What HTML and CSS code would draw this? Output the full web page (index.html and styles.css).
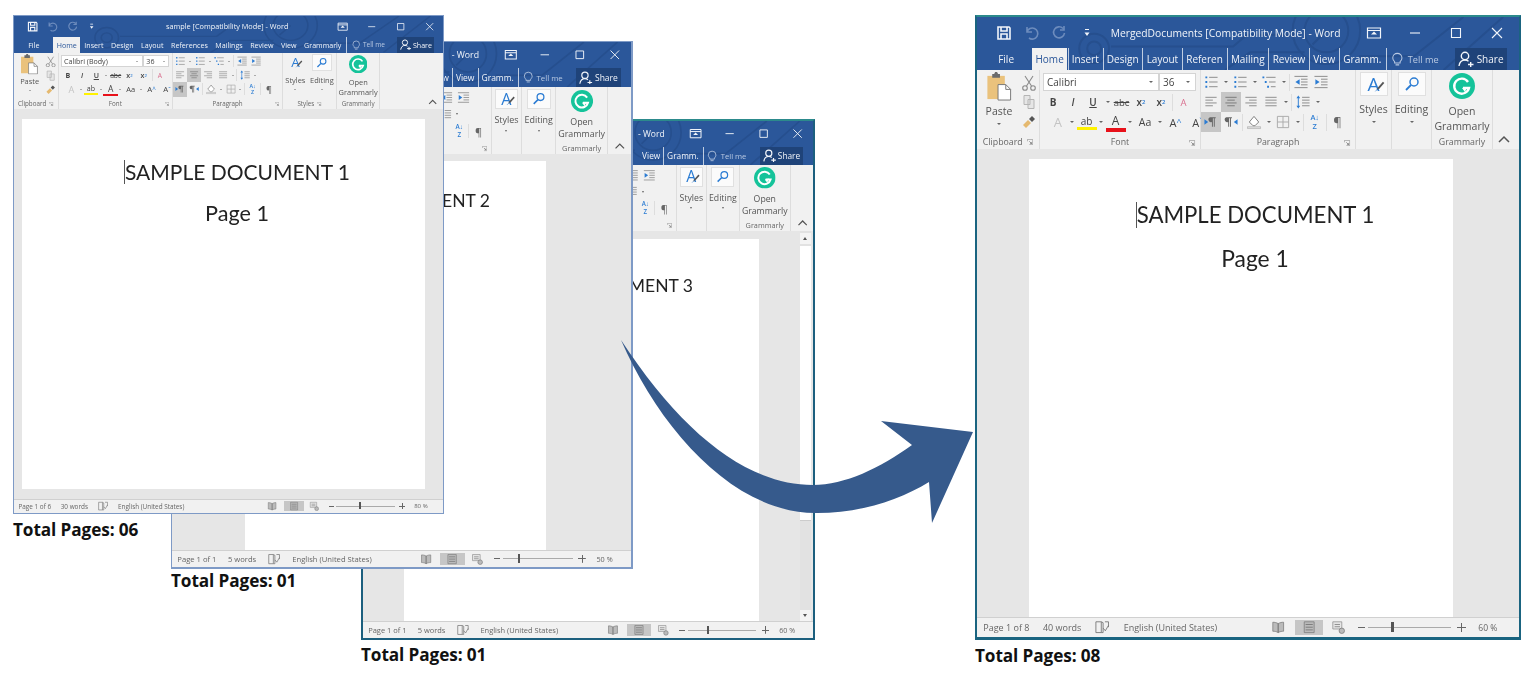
FILE: index.html
```html
<!DOCTYPE html>
<html lang="en">
<head>
  <meta charset="UTF-8">
  <meta name="viewport" content="width=device-width, initial-scale=1.0">
  <title>Merged Documents</title>
  <link rel="stylesheet" href="styles.css">
</head>
<body>
  <!-- shared icons -->
  <svg class="sprite" xmlns="http://www.w3.org/2000/svg">
    <symbol id="i-circuit" viewBox="0 0 546 54" preserveAspectRatio="none">
      <g fill="none" stroke="#264f8e" stroke-width="2">
        <circle cx="118" cy="32" r="15"/><circle cx="118" cy="32" r="7"/>
        <circle cx="352" cy="14" r="34"/><circle cx="352" cy="14" r="22"/>
        <path d="M135 30H258L272 18H320M352 14l-14 14M385 40H440L490 0M470 54L530 0M250 54L275 36H330"/>
      </g>
    </symbol>
    <symbol id="i-save" viewBox="0 0 16 16"><path d="M2 2h11l1 1v11H2z M5 2v4h6V2 M5 14v-5h6v5" fill="none" stroke="currentColor" stroke-width="1.6"/></symbol>
    <symbol id="i-undo" viewBox="0 0 16 16"><path d="M3 7a5.5 5.5 0 1 1 2 6 M3 2v5h5" fill="none" stroke="currentColor" stroke-width="1.6"/></symbol>
    <symbol id="i-redo" viewBox="0 0 16 16"><path d="M12 3.5a5.5 5.5 0 1 0 1.5 4.5 M13 1v4H9" fill="none" stroke="currentColor" stroke-width="1.6"/></symbol>
    <symbol id="i-qat" viewBox="0 0 16 16"><path d="M6 4h4v1H6z M5.5 7.5h5L8 11z" fill="currentColor"/></symbol>
    <symbol id="i-display" viewBox="0 0 16 16"><path d="M1.5 3h13v10h-13z M1.5 5.5h13" fill="none" stroke="currentColor" stroke-width="1.2"/><path d="M8 6.5l3 3H5z" fill="currentColor"/></symbol>
    <symbol id="i-min" viewBox="0 0 16 16"><path d="M3 8h10" stroke="currentColor" stroke-width="1.1"/></symbol>
    <symbol id="i-max" viewBox="0 0 16 16"><path d="M3.5 3.5h9v9h-9z" fill="none" stroke="currentColor" stroke-width="1.1"/></symbol>
    <symbol id="i-close" viewBox="0 0 16 16"><path d="M3 3l10 10M13 3L3 13" stroke="currentColor" stroke-width="1.1"/></symbol>
    <symbol id="i-bulb" viewBox="0 0 16 16"><path d="M5 10.5C3.5 9 3 7.8 3 6.5a5 5 0 0 1 10 0c0 1.300-.5 2.500-2 4v1.500H5z M6 14h4" fill="none" stroke="currentColor" stroke-width="1.1"/></symbol>
    <symbol id="i-share" viewBox="0 0 16 16"><circle cx="7" cy="5" r="3.700" fill="none" stroke="currentColor" stroke-width="1.4"/><path d="M1 15c.5-3.500 2.500-6 6-6 1.500 0 2.500.4 3.500 1.200 M10 13.500h5.500M12.700 11v5" fill="none" stroke="currentColor" stroke-width="1.4"/></symbol>
    <symbol id="i-paste" viewBox="0 0 26 30"><path d="M1 4h18v24H1z" fill="#eac27c"/><path d="M6 2h2l1-2h2l1 2h2v4H6z" fill="#6b6b6b"/><path d="M12 13h8l5 5v11H12z" fill="#fff" stroke="#777"/><path d="M20 13v5h5" fill="none" stroke="#777"/></symbol>
    <symbol id="i-cut" viewBox="0 0 16 16"><path d="M4 1l6.500 10M12 1L5.500 11" fill="none" stroke="#8a8a8a" stroke-width="1.100"/><circle cx="4" cy="13" r="2.300" fill="none" stroke="#8a8a8a" stroke-width="1.100"/><circle cx="12" cy="13" r="2.300" fill="none" stroke="#8a8a8a" stroke-width="1.100"/></symbol>
    <symbol id="i-copy" viewBox="0 0 16 16"><path d="M3 1.500h6v9H3z M7 5.500h6v9H7z" fill="#e6e6e6" stroke="#b5b5b5"/></symbol>
    <symbol id="i-brush" viewBox="0 0 16 16"><path d="M2 11l5-5 3 3-5 5z" fill="#e5b96f"/><path d="M8 5l3-3 3 3-3 3z" fill="#555"/></symbol>
    <symbol id="i-launch" viewBox="0 0 8 8"><path d="M.5 3V.5H7.500V7.500H3" fill="none" stroke="#999"/><path d="M3 3l3 3M6 4v2H4" fill="none" stroke="#777"/></symbol>
    <symbol id="i-bullets" viewBox="0 0 16 16"><path d="M2 2h2v2H2zM2 7h2v2H2zM2 12h2v2H2z" fill="#2b7cd3"/><path d="M6 3h9M6 8h9M6 13h9" stroke="#888"/></symbol>
    <symbol id="i-multi" viewBox="0 0 16 16"><path d="M1 2h2v2H1zM3.500 7h2v2h-2zM6 12h2v2H6z" fill="#2b7cd3"/><path d="M5 3h10M8 8h7M10 13h5" stroke="#888"/></symbol>
    <symbol id="i-outdent" viewBox="0 0 16 16"><path d="M1 2h14M8 5h7M8 8h7M8 11h7M1 14h14" stroke="#888"/><path d="M6.500 5v6L2 8z" fill="#2b7cd3"/></symbol>
    <symbol id="i-indent" viewBox="0 0 16 16"><path d="M1 2h14M8 5h7M8 8h7M8 11h7M1 14h14" stroke="#888"/><path d="M2 5v6l4.500-3z" fill="#2b7cd3"/></symbol>
    <symbol id="i-left" viewBox="0 0 16 16"><path d="M2 3h12M2 6h8M2 9h12M2 12h8" stroke="#8a8a8a"/></symbol>
    <symbol id="i-center" viewBox="0 0 16 16"><path d="M2 3h12M4 6h8M2 9h12M4 12h8" stroke="#777"/></symbol>
    <symbol id="i-right" viewBox="0 0 16 16"><path d="M2 3h12M6 6h8M2 9h12M6 12h8" stroke="#8a8a8a"/></symbol>
    <symbol id="i-justify" viewBox="0 0 16 16"><path d="M2 3h12M2 6h12M2 9h12M2 12h12" stroke="#8a8a8a"/></symbol>
    <symbol id="i-spacing" viewBox="0 0 16 16"><path d="M7 3h8M7 6h8M7 9h8M7 12h8" stroke="#888"/><path d="M3 1l2 3H1zM3 15l2-3H1z" fill="#2b7cd3"/><path d="M3 3v10" stroke="#2b7cd3"/></symbol>
    <symbol id="i-ltr" viewBox="0 0 16 16"><path d="M7 3h6v1h-1v9h-1V4h-1v9H9V8a2.500 2.500 0 0 1-2-5z" fill="#666"/><path d="M1 5l4 3-4 3z" fill="#2b7cd3"/></symbol>
    <symbol id="i-rtl" viewBox="0 0 16 16"><path d="M3 3h6v1H8v9H7V4H6v9H5V8a2.500 2.500 0 0 1-2-5z" fill="#666"/><path d="M15 5l-4 3 4 3z" fill="#2b7cd3"/></symbol>
    <symbol id="i-shade" viewBox="0 0 16 16"><path d="M3 8l5-6 5 6-4 4H7z" fill="#fff" stroke="#777"/><path d="M1 13h14v2H1z" fill="#ddd" stroke="#999" stroke-width=".5"/></symbol>
    <symbol id="i-border" viewBox="0 0 16 16"><path d="M2 2h12v12H2zM8 2v12M2 8h12" fill="none" stroke="#aaa"/></symbol>
    <symbol id="i-pen" viewBox="0 0 16 16"><path d="M13 1l2 2-8 9-3 1 1-3z" fill="#555"/><path d="M2 15c1-2 3-3 5-3" stroke="#2b7cd3" fill="none"/></symbol>
    <symbol id="i-find" viewBox="0 0 16 16"><circle cx="10" cy="6" r="4" fill="none" stroke="#2b7cd3" stroke-width="1.500"/><path d="M7 9l-5 5" stroke="#2b7cd3" stroke-width="1.800"/></symbol>
    <symbol id="i-grammarly" viewBox="0 0 26 26"><circle cx="13" cy="13" r="13" fill="#15c39a"/><path d="M19 9a7.500 7.500 0 1 0 1 6h-6" fill="none" stroke="#fff" stroke-width="2.400"/><path d="M16 19l-3-4 5-1z" fill="#fff"/></symbol>
    <symbol id="i-up" viewBox="0 0 16 16"><path d="M3 11l5-5 5 5" fill="none" stroke="#555" stroke-width="1.500"/></symbol>
    <symbol id="i-proof" viewBox="0 0 16 16"><path d="M7 2H1v12h6V2zM7 2l2 1v11H7M11 2h4v6" fill="none" stroke="#777"/><path d="M9 9l2.500 3L15 6" fill="none" stroke="#777"/></symbol>
    <symbol id="i-read" viewBox="0 0 16 16"><path d="M2 2.500c2 0 4 .3 6 1.500v10c-2-1.200-4-1.500-6-1.500zM14 2.500c-2 0-4 .3-6 1.500v10c2-1.200 4-1.500 6-1.500z" fill="#bbb" stroke="#777" stroke-width=".8"/></symbol>
    <symbol id="i-print" viewBox="0 0 16 16"><path d="M2.500 2h11v12h-11z" fill="#bbb" stroke="#777" stroke-width=".8"/><path d="M4 5h8M4 8h8M4 11h8" stroke="#777"/></symbol>
    <symbol id="i-web" viewBox="0 0 16 16"><path d="M2 2h10v8H2z" fill="#e6e6e6" stroke="#888" stroke-width=".8"/><path d="M4 5h6M4 7.500h6" stroke="#888"/><circle cx="12" cy="12" r="3" fill="#bbb" stroke="#777" stroke-width=".8"/></symbol>
  </svg>

  <main class="canvas">

    <section class="doc-set set-c">
      <div class="window win-c">
        <header class="win-head">
          <svg class="circuit"><use href="#i-circuit"/></svg>
          <div class="titlebar">
            <div class="win-title">- Word</div>
            <div class="win-ctrls"><svg class="ic"><use href="#i-display"/></svg><svg class="ic"><use href="#i-min"/></svg><svg class="ic"><use href="#i-max"/></svg><svg class="ic"><use href="#i-close"/></svg></div>
          </div>
          <nav class="tabs cramped">
            <span class="tab">View</span><span class="tab">Gramm.</span>
            <span class="tab tell"><svg class="ic"><use href="#i-bulb"/></svg>Tell me</span>
            <span class="share"><svg class="ic"><use href="#i-share"/></svg>Share</span>
          </nav>
        </header>
        <div class="ribbon ribbon-end">
          <div class="group g-para">
            <div class="group-body">
              <div class="tool-row para-r1"><svg class="ic tool-ic"><use href="#i-outdent"/></svg><svg class="ic tool-ic"><use href="#i-indent"/></svg></div>
              <div class="tool-row para-r2"><svg class="ic tool-ic"><use href="#i-spacing"/></svg><i class="caret"></i></div>
              <div class="tool-row para-r3"><span class="sort">A↓<br>Z</span><i class="vsep"></i><span class="tool t-pil">¶</span></div>
            </div>
            <div class="group-label"><svg class="launch launch-right"><use href="#i-launch"/></svg></div>
          </div>
          <div class="group g-style">
            <div class="group-body stack"><div class="stack-box"><span class="styles-a">A</span><svg class="pen"><use href="#i-pen"/></svg></div><span class="lbl">Styles</span><i class="caret"></i></div>
            <div class="group-label"></div>
          </div>
          <div class="group g-edit">
            <div class="group-body stack"><div class="stack-box"><svg class="ic"><use href="#i-find"/></svg></div><span class="lbl">Editing</span><i class="caret"></i></div>
            <div class="group-label"></div>
          </div>
          <div class="group g-gram">
            <div class="group-body stack"><svg class="gram-ic"><use href="#i-grammarly"/></svg><span class="lbl">Open</span><span class="lbl">Grammarly</span></div>
            <div class="group-label">Grammarly</div>
          </div>
          <div class="g-rest"><svg class="ic"><use href="#i-up"/></svg></div>
        </div>
        <div class="doc-area">
          <div class="doc-main">
            <div class="page"><p class="doc-h">MENT 3</p></div>
          </div>
          <div class="scrollbar"><i class="sb-btn sb-up"></i><i class="sb-thumb"></i><i class="sb-btn sb-down"></i></div>
        </div>
        <footer class="status">
          <span class="st-page">Page 1 of 1</span><span class="st-words">5 words</span><svg class="ic st-proof"><use href="#i-proof"/></svg><span>English (United States)</span>
          <div class="st-right"><svg class="ic"><use href="#i-read"/></svg><span class="st-active"><svg class="ic"><use href="#i-print"/></svg></span><svg class="ic"><use href="#i-web"/></svg><span class="st-minus"></span><span class="slider"><i class="thumb thumb-60"></i></span><span class="st-plus"></span><span class="st-zoom">60 %</span></div>
        </footer>
      </div>
      <p class="caption">Total Pages: 01</p>
    </section>

    <section class="doc-set set-b">
      <div class="window win-b">
        <header class="win-head">
          <svg class="circuit"><use href="#i-circuit"/></svg>
          <div class="titlebar">
            <div class="win-title">- Word</div>
            <div class="win-ctrls"><svg class="ic"><use href="#i-display"/></svg><svg class="ic"><use href="#i-min"/></svg><svg class="ic"><use href="#i-max"/></svg><svg class="ic"><use href="#i-close"/></svg></div>
          </div>
          <nav class="tabs cramped">
            <span class="tab">w</span><span class="tab">View</span><span class="tab">Gramm.</span>
            <span class="tab tell"><svg class="ic"><use href="#i-bulb"/></svg>Tell me</span>
            <span class="share"><svg class="ic"><use href="#i-share"/></svg>Share</span>
          </nav>
        </header>
        <div class="ribbon ribbon-end">
          <div class="group g-para">
            <div class="group-body">
              <div class="tool-row para-r1"><svg class="ic tool-ic"><use href="#i-outdent"/></svg><svg class="ic tool-ic"><use href="#i-indent"/></svg></div>
              <div class="tool-row para-r2"><svg class="ic tool-ic"><use href="#i-spacing"/></svg><i class="caret"></i></div>
              <div class="tool-row para-r3"><span class="sort">A↓<br>Z</span><i class="vsep"></i><span class="tool t-pil">¶</span></div>
            </div>
            <div class="group-label"><svg class="launch launch-right"><use href="#i-launch"/></svg></div>
          </div>
          <div class="group g-style">
            <div class="group-body stack"><div class="stack-box"><span class="styles-a">A</span><svg class="pen"><use href="#i-pen"/></svg></div><span class="lbl">Styles</span><i class="caret"></i></div>
            <div class="group-label"></div>
          </div>
          <div class="group g-edit">
            <div class="group-body stack"><div class="stack-box"><svg class="ic"><use href="#i-find"/></svg></div><span class="lbl">Editing</span><i class="caret"></i></div>
            <div class="group-label"></div>
          </div>
          <div class="group g-gram">
            <div class="group-body stack"><svg class="gram-ic"><use href="#i-grammarly"/></svg><span class="lbl">Open</span><span class="lbl">Grammarly</span></div>
            <div class="group-label">Grammarly</div>
          </div>
          <div class="g-rest"><svg class="ic"><use href="#i-up"/></svg></div>
        </div>
        <div class="doc-area">
          <div class="doc-main">
            <div class="page"><p class="doc-h">ENT 2</p></div>
          </div>
        </div>
        <footer class="status">
          <span class="st-page">Page 1 of 1</span><span class="st-words">5 words</span><svg class="ic st-proof"><use href="#i-proof"/></svg><span>English (United States)</span>
          <div class="st-right"><svg class="ic"><use href="#i-read"/></svg><span class="st-active"><svg class="ic"><use href="#i-print"/></svg></span><svg class="ic"><use href="#i-web"/></svg><span class="st-minus"></span><span class="slider"><i class="thumb thumb-50"></i></span><span class="st-plus"></span><span class="st-zoom">50 %</span></div>
        </footer>
      </div>
      <p class="caption">Total Pages: 01</p>
    </section>

    <section class="doc-set set-a">
      <div class="window win-a">
        <header class="win-head">
          <svg class="circuit"><use href="#i-circuit"/></svg>
          <div class="titlebar">
            <div class="qat"><svg class="ic"><use href="#i-save"/></svg><svg class="ic faded"><use href="#i-undo"/></svg><svg class="ic faded"><use href="#i-redo"/></svg><svg class="ic"><use href="#i-qat"/></svg></div>
            <div class="win-title">sample [Compatibility Mode] - Word</div>
            <div class="win-ctrls"><svg class="ic"><use href="#i-display"/></svg><svg class="ic"><use href="#i-min"/></svg><svg class="ic"><use href="#i-max"/></svg><svg class="ic"><use href="#i-close"/></svg></div>
          </div>
          <nav class="tabs">
            <span class="tab tab-file">File</span><span class="tab active">Home</span><span class="tab">Insert</span><span class="tab">Design</span><span class="tab">Layout</span><span class="tab">References</span><span class="tab">Mailings</span><span class="tab">Review</span><span class="tab">View</span><span class="tab">Grammarly</span>
            <span class="tab tell"><svg class="ic"><use href="#i-bulb"/></svg>Tell me</span>
            <span class="share"><svg class="ic"><use href="#i-share"/></svg>Share</span>
          </nav>
        </header>
        <div class="ribbon">
          <div class="group g-clip">
            <div class="group-body clip-body">
              <div class="paste"><svg class="paste-ic"><use href="#i-paste"/></svg><span class="lbl">Paste</span><i class="caret"></i></div>
              <div class="clip-side"><svg class="ic"><use href="#i-cut"/></svg><svg class="ic"><use href="#i-copy"/></svg><svg class="ic"><use href="#i-brush"/></svg></div>
            </div>
            <div class="group-label">Clipboard<svg class="launch"><use href="#i-launch"/></svg></div>
          </div>
          <div class="group g-font">
            <div class="group-body font-body">
              <div class="tool-row"><span class="font-box">Calibri (Body)<i class="caret"></i></span><span class="size-box">36<i class="caret"></i></span></div>
              <div class="tool-row">
                <span class="tool t-b">B</span><span class="tool t-i">I</span><span class="tool t-u">U</span><i class="caret"></i><span class="tool t-abc">abc</span><span class="tool t-x">x<sub>2</sub></span><span class="tool t-x">x<sup>2</sup></span><i class="vsep"></i><span class="tool t-clear">A</span>
              </div>
              <div class="tool-row row-indent">
                <span class="tool t-effect">A</span><i class="caret"></i><span class="tool t-hl">ab</span><i class="caret"></i><span class="tool t-color">A</span><i class="caret"></i><span class="tool t-case">Aa</span><i class="caret"></i><span class="tool t-grow">A<small>^</small></span><span class="tool t-grow">A<small>ˇ</small></span>
              </div>
            </div>
            <div class="group-label">Font<svg class="launch launch-right"><use href="#i-launch"/></svg></div>
          </div>
          <div class="group g-para">
            <div class="group-body">
              <div class="tool-row"><svg class="ic tool-ic"><use href="#i-bullets"/></svg><i class="caret"></i><svg class="ic tool-ic"><use href="#i-bullets"/></svg><i class="caret"></i><svg class="ic tool-ic"><use href="#i-multi"/></svg><i class="caret"></i><i class="vsep"></i><svg class="ic tool-ic"><use href="#i-outdent"/></svg><svg class="ic tool-ic"><use href="#i-indent"/></svg></div>
              <div class="tool-row"><svg class="ic tool-ic"><use href="#i-left"/></svg><svg class="ic tool-ic on"><use href="#i-center"/></svg><svg class="ic tool-ic"><use href="#i-right"/></svg><svg class="ic tool-ic"><use href="#i-justify"/></svg><i class="caret"></i><i class="vsep"></i><svg class="ic tool-ic"><use href="#i-spacing"/></svg><i class="caret"></i></div>
              <div class="tool-row"><svg class="ic tool-ic on"><use href="#i-ltr"/></svg><svg class="ic tool-ic"><use href="#i-rtl"/></svg><i class="vsep"></i><svg class="ic tool-ic"><use href="#i-shade"/></svg><i class="caret"></i><svg class="ic tool-ic"><use href="#i-border"/></svg><i class="caret"></i><i class="vsep"></i><span class="sort">A↓<br>Z</span><i class="vsep"></i><span class="tool t-pil">¶</span></div>
            </div>
            <div class="group-label">Paragraph<svg class="launch launch-right"><use href="#i-launch"/></svg></div>
          </div>
          <div class="group g-style-wide">
            <div class="group-body style-pair">
              <div class="stack"><div class="stack-box bare"><span class="styles-a">A</span><svg class="pen"><use href="#i-pen"/></svg></div><span class="lbl">Styles</span><i class="caret"></i></div>
              <div class="stack"><div class="stack-box"><svg class="ic"><use href="#i-find"/></svg></div><span class="lbl">Editing</span><i class="caret"></i></div>
            </div>
            <div class="group-label">Styles<svg class="launch"><use href="#i-launch"/></svg></div>
          </div>
          <div class="group g-gram">
            <div class="group-body stack"><svg class="gram-ic"><use href="#i-grammarly"/></svg><span class="lbl">Open</span><span class="lbl">Grammarly</span></div>
            <div class="group-label">Grammarly</div>
          </div>
          <div class="g-rest"><svg class="ic"><use href="#i-up"/></svg></div>
        </div>
        <div class="doc-area">
          <div class="doc-main">
            <div class="page"><p class="doc-h"><i class="cursor"></i>SAMPLE DOCUMENT 1</p><p class="doc-p">Page 1</p></div>
          </div>
        </div>
        <footer class="status">
          <span class="st-page">Page 1 of 6</span><span class="st-words">30 words</span><svg class="ic st-proof"><use href="#i-proof"/></svg><span>English (United States)</span>
          <div class="st-right"><svg class="ic"><use href="#i-read"/></svg><span class="st-active"><svg class="ic"><use href="#i-print"/></svg></span><svg class="ic"><use href="#i-web"/></svg><span class="st-minus"></span><span class="slider"><i class="thumb thumb-80"></i></span><span class="st-plus"></span><span class="st-zoom">80 %</span></div>
        </footer>
      </div>
      <p class="caption">Total Pages: 06</p>
    </section>

    <section class="doc-set set-d">
      <div class="window win-d">
        <header class="win-head">
          <svg class="circuit"><use href="#i-circuit"/></svg>
          <div class="titlebar">
            <div class="qat"><svg class="ic"><use href="#i-save"/></svg><svg class="ic faded"><use href="#i-undo"/></svg><svg class="ic faded"><use href="#i-redo"/></svg><svg class="ic"><use href="#i-qat"/></svg></div>
            <div class="win-title">MergedDocuments [Compatibility Mode] - Word</div>
            <div class="win-ctrls"><svg class="ic"><use href="#i-display"/></svg><svg class="ic"><use href="#i-min"/></svg><svg class="ic"><use href="#i-max"/></svg><svg class="ic"><use href="#i-close"/></svg></div>
          </div>
          <nav class="tabs cramped">
            <span class="tab tab-file">File</span><span class="tab active">Home</span><span class="tab">Insert</span><span class="tab">Design</span><span class="tab">Layout</span><span class="tab">Referen</span><span class="tab">Mailing</span><span class="tab">Review</span><span class="tab">View</span><span class="tab">Gramm.</span>
            <span class="tab tell"><svg class="ic"><use href="#i-bulb"/></svg>Tell me</span>
            <span class="share"><svg class="ic"><use href="#i-share"/></svg>Share</span>
          </nav>
        </header>
        <div class="ribbon">
          <div class="group g-clip">
            <div class="group-body clip-body">
              <div class="paste"><svg class="paste-ic"><use href="#i-paste"/></svg><span class="lbl">Paste</span><i class="caret"></i></div>
              <div class="clip-side"><svg class="ic"><use href="#i-cut"/></svg><svg class="ic"><use href="#i-copy"/></svg><svg class="ic"><use href="#i-brush"/></svg></div>
            </div>
            <div class="group-label">Clipboard<svg class="launch"><use href="#i-launch"/></svg></div>
          </div>
          <div class="group g-font">
            <div class="group-body font-body">
              <div class="tool-row"><span class="font-box">Calibri<i class="caret"></i></span><span class="size-box">36<i class="caret"></i></span></div>
              <div class="tool-row">
                <span class="tool t-b">B</span><span class="tool t-i">I</span><span class="tool t-u">U</span><i class="caret"></i><span class="tool t-abc">abc</span><span class="tool t-x">x<sub>2</sub></span><span class="tool t-x">x<sup>2</sup></span><i class="vsep"></i><span class="tool t-clear">A</span>
              </div>
              <div class="tool-row row-indent">
                <span class="tool t-effect">A</span><i class="caret"></i><span class="tool t-hl">ab</span><i class="caret"></i><span class="tool t-color">A</span><i class="caret"></i><span class="tool t-case">Aa</span><i class="caret"></i><span class="tool t-grow">A<small>^</small></span><span class="tool t-grow">A<small>ˇ</small></span>
              </div>
            </div>
            <div class="group-label">Font<svg class="launch launch-right"><use href="#i-launch"/></svg></div>
          </div>
          <div class="group g-para">
            <div class="group-body">
              <div class="tool-row"><svg class="ic tool-ic"><use href="#i-bullets"/></svg><i class="caret"></i><svg class="ic tool-ic"><use href="#i-bullets"/></svg><i class="caret"></i><svg class="ic tool-ic"><use href="#i-multi"/></svg><i class="caret"></i><i class="vsep"></i><svg class="ic tool-ic"><use href="#i-outdent"/></svg><svg class="ic tool-ic"><use href="#i-indent"/></svg></div>
              <div class="tool-row"><svg class="ic tool-ic"><use href="#i-left"/></svg><svg class="ic tool-ic on"><use href="#i-center"/></svg><svg class="ic tool-ic"><use href="#i-right"/></svg><svg class="ic tool-ic"><use href="#i-justify"/></svg><i class="caret"></i><i class="vsep"></i><svg class="ic tool-ic"><use href="#i-spacing"/></svg><i class="caret"></i></div>
              <div class="tool-row"><svg class="ic tool-ic on"><use href="#i-ltr"/></svg><svg class="ic tool-ic"><use href="#i-rtl"/></svg><i class="vsep"></i><svg class="ic tool-ic"><use href="#i-shade"/></svg><i class="caret"></i><svg class="ic tool-ic"><use href="#i-border"/></svg><i class="caret"></i><i class="vsep"></i><span class="sort">A↓<br>Z</span><i class="vsep"></i><span class="tool t-pil">¶</span></div>
            </div>
            <div class="group-label">Paragraph<svg class="launch launch-right"><use href="#i-launch"/></svg></div>
          </div>
          <div class="group g-style">
            <div class="group-body stack"><div class="stack-box"><span class="styles-a">A</span><svg class="pen"><use href="#i-pen"/></svg></div><span class="lbl">Styles</span><i class="caret"></i></div>
            <div class="group-label"></div>
          </div>
          <div class="group g-edit">
            <div class="group-body stack"><div class="stack-box"><svg class="ic"><use href="#i-find"/></svg></div><span class="lbl">Editing</span><i class="caret"></i></div>
            <div class="group-label"></div>
          </div>
          <div class="group g-gram">
            <div class="group-body stack"><svg class="gram-ic"><use href="#i-grammarly"/></svg><span class="lbl">Open</span><span class="lbl">Grammarly</span></div>
            <div class="group-label">Grammarly</div>
          </div>
          <div class="g-rest"><svg class="ic"><use href="#i-up"/></svg></div>
        </div>
        <div class="doc-area">
          <div class="doc-main">
            <div class="page"><p class="doc-h"><i class="cursor"></i>SAMPLE DOCUMENT 1</p><p class="doc-p">Page 1</p></div>
          </div>
        </div>
        <footer class="status">
          <span class="st-page">Page 1 of 8</span><span class="st-words">40 words</span><svg class="ic st-proof"><use href="#i-proof"/></svg><span>English (United States)</span>
          <div class="st-right"><svg class="ic"><use href="#i-read"/></svg><span class="st-active"><svg class="ic"><use href="#i-print"/></svg></span><svg class="ic"><use href="#i-web"/></svg><span class="st-minus"></span><span class="slider"><i class="thumb thumb-60"></i></span><span class="st-plus"></span><span class="st-zoom">60 %</span></div>
        </footer>
      </div>
      <p class="caption">Total Pages: 08</p>
    </section>

    <!-- big arrow, sits over the windows -->
    <svg class="merge-arrow" viewBox="0 0 1536 685">
      <path d="M621 340C660 430 735 514 817 513C860 513 900 500 929 482L932 523L973 432L881 421L912 445C880 468 845 485 813 485C745 485 680 430 621 340Z"/>
    </svg>
  </main>
</body>
</html>
```

FILE: styles.css
```css
body {
  margin: 0;
  background-color: #ffffff;
  font-family: "Open Sans", "Noto Sans", Arial, sans-serif;
}

.sprite {
  display: none;
}

.canvas {
  position: relative;
  width: 1536px;
  height: 685px;
  overflow: hidden;
}

/* each window and its caption is placed on the free canvas */
.doc-set {
  position: absolute;
}

.set-a { left: 13px; top: 15px; }
.set-b { left: 171px; top: 41px; }
.set-c { left: 361px; top: 119px; }
.set-d { left: 975px; top: 15px; }

.caption {
  margin: 4px 0 0;
  font-size: 17.2px;
  line-height: 23px;
  font-weight: 700;
  letter-spacing: -0.1px;
  color: #111111;
}

.set-b .caption {
  margin-top: 0;
}

.set-c .caption {
  margin-top: 3px;
}

.merge-arrow {
  position: absolute;
  left: 0;
  top: 0;
  width: 1536px;
  height: 685px;
  fill: #365a8c;
  pointer-events: none;
}

.window {
  box-sizing: border-box;
  display: flex;
  flex-direction: column;
  overflow: hidden;
  background-color: #f1f1f1;
  filter: blur(0.45px);
}

.win-a { width: 431px; height: 499px; font-size: 7.1px; border: 1px solid #7e9ac6; }
.win-b { width: 462px; height: 528px; font-size: 8.5px; border: 1px solid #7e9ac6; border-width: 1px 2px 2px 1px; }
.win-c { width: 454px; height: 521px; font-size: 8.3px; border: 2px solid #1c5f7e; border-top-color: #2c8a8c; }
.win-d { width: 546px; height: 625px; font-size: 10px; border: 2px solid #1a6480; border-top-color: #2c8a8c; border-bottom-width: 3px; }

.win-head {
  position: relative;
  flex: none;
  background-color: #2b579a;
  color: #f2f5fa;
}

.circuit {
  position: absolute;
  left: 0;
  top: 0;
  width: 100%;
  height: 100%;
}

.ic {
  display: block;
  flex: none;
  width: 1.6em;
  height: 1.6em;
}

.faded {
  color: #6d8cbd;
}

.titlebar {
  position: relative;
  display: flex;
  align-items: center;
  height: 3.1em;
}

.win-a .titlebar {
  height: 2.95em;
}

.qat {
  display: flex;
  align-items: center;
  gap: 1.15em;
  margin-left: 1.9em;
}

.win-title {
  flex: 1;
  text-align: center;
  font-size: 1.03em;
  white-space: nowrap;
}

.win-a .win-title { padding-left: 2.8em; }
.win-d .win-title { padding-right: 0.9em; }

.win-b .win-title,
.win-c .win-title {
  text-align: right;
  padding-right: 2.8em;
}

.win-ctrls {
  display: flex;
  align-items: center;
  gap: 2.5em;
  margin-right: 1.1em;
}

.win-d .win-ctrls {
  margin-right: 1.4em;
}

.tabs {
  position: relative;
  display: flex;
  justify-content: flex-end;
  align-items: stretch;
  height: 2.2em;
  white-space: nowrap;
}

.tab {
  display: flex;
  align-items: center;
  padding: 0 0.32em;
  margin-left: 0.07em;
}

.win-a .tab {
  padding: 0 0.5em;
}

.tab-file {
  margin-left: 1.5em;
  margin-right: auto;
}

.win-d .tab-file {
  margin-left: 1.8em;
}

.tab.active {
  background-color: #f1f1f1;
  color: #2b579a;
}

.cramped .tab + .tab:not(.active):not(.tell) {
  border-left: 1px solid rgba(255, 255, 255, 0.7);
}

.tab.tell {
  gap: 0.3em;
  margin-left: 0.2em;
  font-size: 0.92em;
  color: #b9c9e2;
  border-left: 1px solid rgba(255, 255, 255, 0.7);
}

.share {
  display: flex;
  align-items: center;
  gap: 0.25em;
  margin: 0 1.2em 0 1.3em;
  padding: 0 0.35em;
  background-color: #1f4379;
}

/* ribbon */
.ribbon {
  flex: none;
  display: flex;
  height: 7.9em;
  background-color: #f1f1f1;
  color: #444444;
}

.ribbon-end .g-para {
  margin-left: auto;
}

.group {
  box-sizing: border-box;
  display: flex;
  flex-direction: column;
  flex: none;
  border-right: 1px solid #dddddd;
}

.g-clip { width: 6.3em; }
.g-font { width: 16.1em; }
.g-para { width: 15.5em; }
.g-style { width: 3.6em; }
.g-edit { width: 4em; }
.g-gram { width: 6.1em; }
.g-style-wide { width: 7.6em; }

.g-rest {
  flex: 1;
  display: flex;
  justify-content: flex-end;
  align-items: flex-end;
  padding: 0 0.7em 0.2em 0;
}

.ribbon-end .g-rest {
  flex: none;
  box-sizing: border-box;
  width: 2.7em;
  padding-right: 0.5em;
}

.group-body {
  flex: 1;
  padding-top: 0.2em;
  min-height: 0;
}

.group-label {
  position: relative;
  height: 1.5em;
  text-align: center;
  font-size: 0.88em;
  line-height: 1.5em;
  color: #666666;
  white-space: nowrap;
}

.launch {
  width: 0.7em;
  height: 0.7em;
  margin-left: 0.5em;
}

.launch-right {
  position: absolute;
  right: 0.5em;
  top: 0.45em;
}

.lbl {
  font-size: 1.05em;
  line-height: 1.4em;
  white-space: nowrap;
  color: #555555;
}

.caret {
  display: block;
  flex: none;
  width: 0;
  height: 0;
  margin: 0 0.25em;
  border-left: 0.2em solid transparent;
  border-right: 0.2em solid transparent;
  border-top: 0.25em solid #666666;
}

.clip-body {
  display: flex;
}

.paste {
  display: flex;
  flex-direction: column;
  align-items: center;
  width: 4.4em;
}

.paste-ic {
  width: 2.6em;
  height: 2.9em;
  margin-bottom: 0.25em;
}

.paste .caret {
  margin-top: 0.5em;
}

.clip-side {
  display: flex;
  flex-direction: column;
  justify-content: space-between;
  padding: 0.25em 0 0.6em;
}

.tool-row {
  display: flex;
  align-items: center;
  height: 2em;
  white-space: nowrap;
}

.font-body {
  padding-left: 0.3em;
}

.row-indent {
  padding-left: 0.5em;
}

.para-r1,
.para-r2,
.para-r3 {
  justify-content: flex-end;
}

.para-r1 { padding-right: 2.2em; }
.para-r2 { padding-right: 3.6em; }
.para-r3 { padding-right: 0.4em; }

.font-box,
.size-box {
  box-sizing: border-box;
  display: flex;
  align-items: center;
  justify-content: space-between;
  height: 1.8em;
  padding: 0 0.3em;
  background-color: #ffffff;
  border: 1px solid #d4d4d4;
}

.font-box { width: 11.6em; }
.size-box { width: 3.7em; }

.tool {
  display: flex;
  align-items: center;
  justify-content: center;
  flex: none;
  width: 2em;
  height: 2em;
  color: #444444;
}

.tool-ic {
  box-sizing: border-box;
  width: 2em;
  height: 2em;
  padding: 0.25em;
}

.tool-ic.on {
  background-color: #c6c6c6;
}

.vsep {
  display: block;
  flex: none;
  width: 1px;
  height: 1.7em;
  margin: 0 0.1em;
  background-color: #dddddd;
}

.t-b { font-weight: 700; }
.t-i { font-style: italic; font-weight: 600; }
.t-u { text-decoration: underline; font-weight: 600; }
.t-abc { text-decoration: line-through; font-size: 0.95em; }
.t-x { font-weight: 600; }
.t-x sub, .t-x sup { font-size: 0.6em; color: #2b7cd3; }
.t-clear { color: #d9708f; font-size: 0.95em; }
.t-effect { color: #c4c4c4; font-size: 1.3em; width: 1.5em; height: 1.5em; }
.t-hl { border-bottom: 0.35em solid #fff200; box-sizing: border-box; height: 1.6em; }
.t-color { border-bottom: 0.35em solid #e8111a; box-sizing: border-box; height: 1.6em; font-size: 1.2em; width: 1.67em; }
.t-case { font-size: 1.05em; }
.t-grow { font-size: 1.1em; }
.t-grow small { font-size: 0.8em; color: #2b7cd3; }
.t-pil { font-size: 1.3em; width: 1.54em; height: 1.54em; color: #666666; }

.sort {
  flex: none;
  width: 2.6em;
  text-align: center;
  font-size: 0.75em;
  line-height: 1.25em;
  font-weight: 600;
  color: #2b7cd3;
}

.stack {
  display: flex;
  flex-direction: column;
  align-items: center;
}

.stack .caret {
  margin-top: 0.4em;
}

.stack-box {
  box-sizing: border-box;
  position: relative;
  display: flex;
  align-items: center;
  justify-content: center;
  width: 2.8em;
  height: 2.4em;
  margin-bottom: 0.6em;
  background-color: #fbfbfb;
  border: 1px solid #e0e0e0;
}

.stack-box.bare {
  background: none;
  border-color: transparent;
}

.styles-a {
  font-size: 1.9em;
  line-height: 1;
  color: #2b7cd3;
}

.pen {
  position: absolute;
  right: 0.2em;
  bottom: 0.3em;
  width: 1.1em;
  height: 1.1em;
}

.style-pair {
  display: flex;
  justify-content: space-around;
}

.gram-ic {
  width: 2.6em;
  height: 2.6em;
  margin: 0.1em 0 0.5em;
}

/* document area */
.doc-area {
  flex: 1;
  display: flex;
  min-height: 0;
  background-color: #e6e6e6;
  border-bottom: 1px solid #d0d0d0;
}

.doc-main {
  flex: 1;
  padding-top: 10px;
}

.win-b .doc-main { padding-top: 7px; }
.win-c .doc-main { padding-top: 8px; }

.page {
  box-sizing: border-box;
  height: 100%;
  background-color: #ffffff;
  text-align: center;
  font-family: Lato, "Open Sans", sans-serif;
  color: #222222;
}

.win-a .page { margin-left: 8px; width: 403px; height: calc(100% - 10px); padding: 40px 0 0 27px; font-size: 21px; }
.win-b .page { margin-left: 73px; width: 301px; padding: 29px 56px 0 0; font-size: 17.5px; text-align: right; }
.win-c .page { margin-left: 41px; width: 355px; padding: 36px 66px 0 0; font-size: 17.5px; text-align: right; }
.win-d .page { margin-left: 52px; width: 424px; padding: 43px 0 0 28px; font-size: 22.2px; }

.doc-h {
  margin: 0;
  line-height: 1.2em;
  white-space: nowrap;
}

.doc-p {
  margin: 0.7em 0 0;
  line-height: 1.2em;
  font-size: 1.03em;
}

.win-a .doc-p {
  margin-top: 0.8em;
}

.cursor {
  display: inline-block;
  width: 1px;
  height: 1.15em;
  vertical-align: -0.2em;
  background-color: #555555;
}

.scrollbar {
  display: flex;
  flex-direction: column;
  flex: none;
  width: 11px;
  margin-right: 2px;
  padding-top: 2px;
  background-color: #e2e2e2;
}

.sb-btn {
  display: block;
  flex: none;
  height: 11px;
  background-color: #f4f4f4;
}

.sb-up,
.sb-down {
  position: relative;
}

.sb-up::after,
.sb-down::after {
  content: "";
  position: absolute;
  left: 3px;
  top: 4px;
  border-left: 2.5px solid transparent;
  border-right: 2.5px solid transparent;
}

.sb-up::after { border-bottom: 3px solid #555555; }
.sb-down::after { border-top: 3px solid #555555; }

.sb-thumb {
  display: block;
  height: 274px;
  margin-top: 2px;
  margin-bottom: auto;
  background-color: #ffffff;
  border-bottom: 1px solid #cccccc;
}

/* status bar */
.status {
  flex: none;
  display: flex;
  align-items: center;
  height: 2.1em;
  padding-left: 0.7em;
  background-color: #f1f1f1;
  font-size: 0.9em;
  color: #666666;
  white-space: nowrap;
}

.st-page { margin-right: 1.5em; }
.st-words { margin-right: 1.5em; }
.st-proof { margin-right: 1.6em; }

.st-right {
  display: flex;
  align-items: center;
  align-self: stretch;
  margin-left: auto;
  margin-right: 2.4em;
}

.st-active {
  display: flex;
  align-items: center;
  justify-content: center;
  width: 3.2em;
  margin: 0 0.8em 0 1em;
  background-color: #c6c6c6;
}

.st-minus,
.st-plus {
  position: relative;
  display: block;
  flex: none;
  width: 1em;
  height: 1em;
  background: linear-gradient(#666666, #666666) center / 100% 1px no-repeat;
}

.st-minus {
  width: 0.8em;
  margin-left: 1.45em;
}

.st-plus {
  background:
    linear-gradient(#666666, #666666) center / 100% 1px no-repeat,
    linear-gradient(#666666, #666666) center / 1px 100% no-repeat;
}

.slider {
  position: relative;
  display: block;
  flex: none;
  width: 9.2em;
  height: 1px;
  margin: 0 0.7em 0 0.3em;
  background-color: #aaaaaa;
}

.thumb {
  position: absolute;
  top: -0.55em;
  width: 0.3em;
  height: 1.1em;
  background-color: #555555;
}

.thumb-50 { left: 22%; }
.thumb-60 { left: 28%; }
.thumb-80 { left: 40%; }

.st-zoom {
  margin-left: 1.45em;
  min-width: 2.2em;
  font-size: 0.95em;
}
```
